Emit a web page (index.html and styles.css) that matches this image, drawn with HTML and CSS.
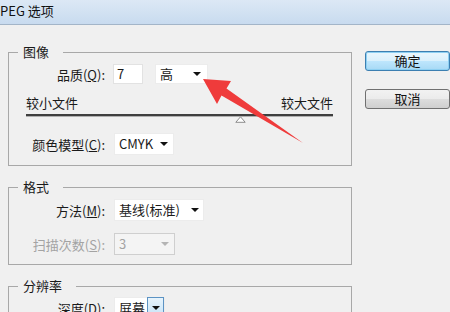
FILE: index.html
```html
<!DOCTYPE html>
<html>
<head>
  <title>JPEG 选项</title>
  <link rel="stylesheet" href="styles.css">
</head>
<body>
  <div class="titlebar"><span class="title">PEG 选项</span></div>

  <div class="dialog">
    <div class="groups">
      <!-- 图像 -->
      <fieldset class="group group-image">
        <legend>图像</legend>
        <div class="row">
          <span class="label">品质(<u>Q</u>):</span>
          <div class="field field-quality">7</div>
          <div class="combo combo-level">
            <span>高</span>
            <svg class="caret" width="8" height="4" viewBox="0 0 8 4"><polygon points="0,0 8,0 4,4"/></svg>
          </div>
        </div>
        <div class="scale-labels">
          <span>较小文件</span>
          <span>较大文件</span>
        </div>
        <div class="slider">
          <svg class="thumb" width="11" height="7" viewBox="0 0 11 7"><polygon points="5.5,0.8 10.2,6.3 0.8,6.3" fill="#fff" stroke="#8c8c8c" stroke-width="1"/></svg>
        </div>
        <div class="row row-color">
          <span class="label">颜色模型(<u>C</u>):</span>
          <div class="combo combo-color">
            <span>CMYK</span>
            <svg class="caret" width="8" height="4" viewBox="0 0 8 4"><polygon points="0,0 8,0 4,4"/></svg>
          </div>
        </div>
      </fieldset>

      <!-- 格式 -->
      <fieldset class="group group-format">
        <legend>格式</legend>
        <div class="row">
          <span class="label">方法(<u>M</u>):</span>
          <div class="combo combo-method">
            <span>基线(标准)</span>
            <svg class="caret" width="8" height="4" viewBox="0 0 8 4"><polygon points="0,0 8,0 4,4"/></svg>
          </div>
        </div>
        <div class="row row-scan">
          <span class="label label-disabled">扫描次数(<u>S</u>):</span>
          <div class="combo combo-scan is-disabled">
            <span>3</span>
            <svg class="caret" width="8" height="4" viewBox="0 0 8 4"><polygon points="0,0 8,0 4,4"/></svg>
          </div>
        </div>
      </fieldset>

      <!-- 分辨率 -->
      <fieldset class="group group-resolution">
        <legend>分辨率</legend>
        <div class="row">
          <span class="label">深度(<u>D</u>):</span>
          <div class="combo combo-depth">
            <span>屏幕</span>
            <span class="drop-button">
              <svg class="caret" width="8" height="4" viewBox="0 0 8 4"><polygon points="0,0 8,0 4,4"/></svg>
            </span>
          </div>
        </div>
      </fieldset>
    </div>

    <div class="actions">
      <button class="btn btn-default">确定</button>
      <button class="btn">取消</button>
    </div>
  </div>

  <!-- red annotation arrow drawn over the dialog -->
  <svg class="annotation" width="450" height="312" viewBox="0 0 450 312">
    <polygon points="203,79 231,81 226.5,88.5 303,143 221.5,95.5 217,104" fill="#ef3b3b"/>
  </svg>
</body>
</html>
```

FILE: styles.css
```css
body {
  margin: 0;
  width: 450px;
  height: 312px;
  overflow: hidden;
  position: relative;
  background: #f0f0f0;
  font-family: "Noto Sans CJK SC", sans-serif;
  font-size: 13px;
  color: #1a1a1a;
}

.titlebar {
  height: 24px;
  border-bottom: 1px solid #a3b5c8;
  background: linear-gradient(180deg, #dce8f5 0%, #c8dbef 100%);
  line-height: 21px;
}

.title {
  font-size: 13px;
  color: #111;
}

.dialog {
  display: flex;
  align-items: flex-start;
  gap: 13px;
  padding: 19px 0 0 8px;
}

.groups {
  width: 344px;
  display: flex;
  flex-direction: column;
  gap: 13px;
}

.group {
  margin: 0;
  min-width: 0;
  padding: 3px 18px 10px 17px;
  border: 1px solid #a8a8a8;
}

.group legend {
  margin-left: -8px;
  padding: 0 14px 0 5px;
  line-height: 16px;
}

.group-format {
  padding-top: 4px;
  padding-bottom: 9px;
}

.group-resolution {
  padding-top: 3px;
}

.row {
  display: flex;
  align-items: center;
  height: 22px;
}

.row-scan {
  margin-top: 12px;
}

.row-color {
  margin-top: 17px;
}

.label {
  width: 79px;
  margin-right: 8px;
  flex-shrink: 0;
  text-align: right;
  white-space: nowrap;
}

.label-disabled {
  color: #a3a3a3;
}

.field {
  height: 20px;
  box-sizing: border-box;
  border: 1px solid #e2e2e2;
  background: #fff;
  line-height: 18px;
  padding-left: 3px;
}

.field-quality {
  width: 30px;
}

.combo {
  display: flex;
  align-items: center;
  justify-content: space-between;
  height: 22px;
  box-sizing: border-box;
  padding: 0 5px 0 4px;
  background: #fff;
  border: 1px solid #ececec;
  line-height: 20px;
  white-space: nowrap;
}

.combo-level {
  width: 53px;
  height: 20px;
  margin-left: 12px;
  padding-right: 6px;
}

.combo-color {
  width: 60px;
  margin-left: 1px;
}

.combo-method {
  width: 90px;
  margin-left: 1px;
  padding-right: 4px;
}

.combo-scan {
  width: 61px;
  margin-left: 1px;
}

.combo-depth {
  width: 51px;
  margin-left: 1px;
  padding-right: 0;
}

.caret {
  display: block;
  fill: #111;
}

.is-disabled {
  background: #f4f4f4;
  border-color: #cfcfcf;
  color: #a3a3a3;
}

.is-disabled .caret {
  fill: #b4b4b4;
}

.drop-button {
  display: flex;
  align-items: center;
  justify-content: center;
  width: 17px;
  height: 22px;
  box-sizing: border-box;
  border: 1px solid #5c93c4;
  background: linear-gradient(180deg, #e8f4fc 0%, #c3e2f7 100%);
}

.scale-labels {
  display: flex;
  justify-content: space-between;
  margin-top: 10px;
  line-height: 16px;
}

.slider {
  position: relative;
  height: 2px;
  margin-top: 3px;
  background: #3f3f3f;
  box-shadow: 0 1px 0 #b0b0b0;
}

.thumb {
  position: absolute;
  left: 209px;
  top: 2px;
}

.actions {
  display: flex;
  flex-direction: column;
  gap: 18px;
  padding-top: 7px;
}

.btn {
  width: 85px;
  height: 20px;
  padding: 0;
  font-family: inherit;
  font-size: 13px;
  line-height: 18px;
  color: #111;
  border: 1px solid #707070;
  border-radius: 3px;
  background: linear-gradient(180deg, #f2f2f2 0%, #ebebeb 50%, #dddddd 51%, #cfcfcf 100%);
}

.btn-default {
  border-color: #3c7fb1;
  background: linear-gradient(180deg, #eaf6fd 0%, #d9f0fc 50%, #bee6fd 51%, #a7d9f5 100%);
  box-shadow: inset 0 0 0 1px #8ed0f2;
}

.annotation {
  position: absolute;
  left: 0;
  top: 0;
  pointer-events: none;
}
```
